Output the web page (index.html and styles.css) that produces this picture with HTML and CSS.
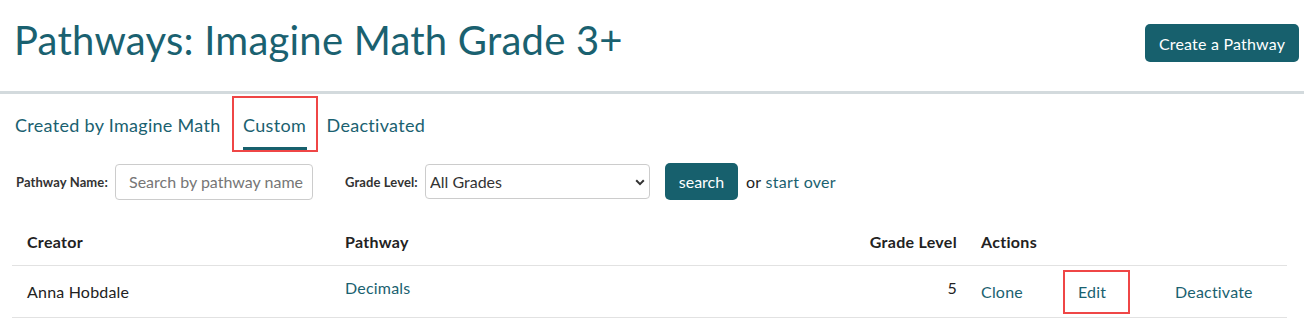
FILE: index.html
```html
<!DOCTYPE html>
<html lang="en">
<head>
<meta charset="utf-8">
<title>Pathways</title>
<link rel="stylesheet" href="styles.css">
</head>
<body>
<header class="page-header">
  <h1 class="page-title">Pathways: Imagine Math Grade 3+</h1>
  <button class="btn btn-create">Create a Pathway</button>
</header>

<nav class="tabs">
  <a class="tab">Created by Imagine Math</a>
  <span class="tab-box"><a class="tab tab-active">Custom</a></span>
  <a class="tab tab-last">Deactivated</a>
</nav>

<form class="filters">
  <label class="filter-label">Pathway Name:</label>
  <input class="text-input" type="text" placeholder="Search by pathway name">
  <label class="filter-label filter-label-grade">Grade Level:</label>
  <div class="select-wrap">
    <select class="select-input">
      <option>All Grades</option>
    </select>
    <svg class="chevron" width="10" height="7" viewBox="0 0 10 7"><path d="M1.2 1.3 L5 5.1 L8.8 1.3" fill="none" stroke="#333" stroke-width="2"/></svg>
  </div>
  <button class="btn btn-search" type="button">search</button>
  <span class="or-text">or <a class="link">start over</a></span>
</form>

<div class="table">
  <div class="row row-head">
    <div class="cell c-creator">Creator</div>
    <div class="cell c-pathway">Pathway</div>
    <div class="cell c-grade">Grade Level</div>
    <div class="cell c-actions">Actions</div>
  </div>
  <div class="row row-body">
    <div class="cell c-creator">Anna Hobdale</div>
    <div class="cell c-pathway raised"><a class="link">Decimals</a></div>
    <div class="cell c-grade raised">5</div>
    <div class="cell c-actions actions">
      <a class="link act">Clone</a>
      <span class="edit-box"><a class="link">Edit</a></span>
      <a class="link act act-last">Deactivate</a>
    </div>
  </div>
</div>
</body>
</html>
```

FILE: styles.css
```css
* { box-sizing: border-box; }

body {
  margin: 0;
  background: #ffffff;
  font-family: Lato, "Open Sans", "Liberation Sans", sans-serif;
  color: #222;
}

.page-header {
  height: 94px;
  display: flex;
  justify-content: space-between;
  align-items: flex-start;
  padding: 0 5px 0 14px;
  border-bottom: 3px solid #d3dadd;
}

.page-title {
  margin: 15px 0 0;
  font-size: 40px;
  line-height: 50px;
  font-weight: 400;
  letter-spacing: 0.22px;
  color: #1a6170;
}

.btn {
  border: none;
  background: #17606d;
  color: #fff;
  font-family: inherit;
  border-radius: 5px;
  cursor: pointer;
}

.btn-create {
  margin-top: 24px;
  width: 154px;
  height: 38px;
  font-size: 16px;
  letter-spacing: 0.2px;
  padding: 0;
}

.tabs {
  display: flex;
  align-items: flex-start;
  padding-left: 15px;
  margin-top: 2px;
  height: 55px;
}

.tab {
  font-size: 18px;
  line-height: 22px;
  letter-spacing: 0.3px;
  color: #1a6170;
  margin-top: 18px;
  text-decoration: none;
  display: inline-block;
}

.tab-box {
  display: flex;
  justify-content: center;
  width: 86px;
  height: 56px;
  margin-left: 11px;
  border: 2px solid #ef4646;
}

.tab-box .tab {
  margin-top: 16px;
  padding-bottom: 4px;
  border-bottom: 3px solid #17606d;
  width: 64px;
  text-align: center;
}

.tab-last { margin-left: 9px; }

.filters {
  display: flex;
  align-items: center;
  margin-top: 12px;
  padding-left: 16px;
  height: 37px;
}

.filter-label {
  font-size: 13px;
  font-weight: 700;
  letter-spacing: 0.1px;
  color: #333;
  width: 99px;
}

.filter-label-grade { margin-left: 32px; width: 80px; }

.text-input {
  width: 198px;
  height: 36px;
  border: 1px solid #cccccc;
  border-radius: 4px;
  padding: 0 8px 0 13px;
  font-family: inherit;
  font-size: 16px;
  color: #333;
}

.text-input::placeholder { color: #767676; }

.select-wrap {
  position: relative;
  width: 225px;
  height: 35px;
}

.select-input {
  appearance: none;
  -webkit-appearance: none;
  width: 100%;
  height: 100%;
  border: 1px solid #cccccc;
  border-radius: 4px;
  background: #fff;
  padding: 0 4px;
  font-family: inherit;
  font-size: 16px;
  color: #333;
}

.chevron {
  position: absolute;
  right: 5px;
  top: 15px;
  pointer-events: none;
}

.btn-search {
  margin-left: 15px;
  width: 73px;
  height: 37px;
  font-size: 16px;
  padding: 0;
}

.or-text {
  margin-left: 8px;
  font-size: 16px;
  letter-spacing: 0.3px;
  color: #222;
}

.link {
  color: #1a6170;
  text-decoration: none;
}

.table {
  margin: 18px 17px 0 12px;
}

.row {
  display: grid;
  grid-template-columns: 318px 639px 318px;
  align-items: center;
  border-bottom: 1px solid #e2e2e2;
  font-size: 16px;
  letter-spacing: 0.2px;
}

.row-head {
  height: 48px;
  font-weight: 700;
  letter-spacing: 0.3px;
  color: #222;
}

.row-body {
  height: 52px;
}

.cell { padding: 0 12px 0 15px; }

.c-grade {
  grid-column: 2;
  grid-row: 1;
  text-align: right;
}

.c-pathway { grid-column: 2; grid-row: 1; }

.c-actions { grid-column: 3; grid-row: 1; padding-left: 12px; }

.raised { margin-bottom: 8px; }

.actions {
  display: flex;
  align-items: center;
}

.act { width: 97px; }

.edit-box {
  display: flex;
  align-items: center;
  width: 67px;
  height: 44px;
  margin-left: -15px;
  padding-left: 13px;
  border: 2px solid #ef4646;
  margin-right: 45px;
}
```
